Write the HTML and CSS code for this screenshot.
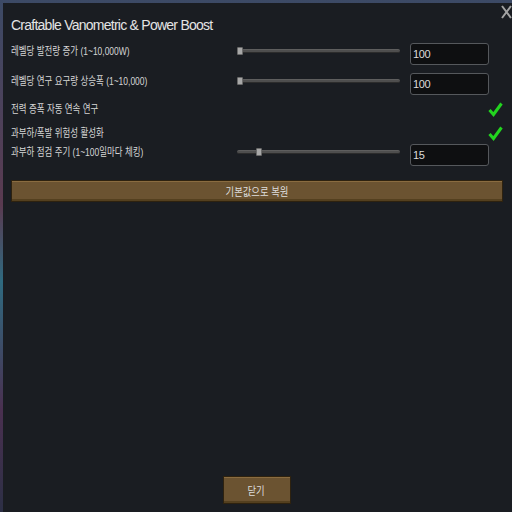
FILE: index.html
```html
<!DOCTYPE html>
<html>
<head>
<meta charset="utf-8">
<link rel="stylesheet" href="styles.css">
</head>
<body>
<div class="panel">
  <div class="title">Craftable Vanometric &amp; Power Boost</div>
  <svg class="close-x" width="11" height="14" viewBox="0 0 11 14"><path d="M1 1 L10 13 M10 1 L1 13" stroke="#a3a3a3" stroke-width="2" fill="none"/></svg>
  <div class="row r1">
    <div class="label">레벨당 발전량 증가 (1~10,000W)</div>
    <div class="slider"><div class="track"></div><div class="thumb" style="left:0px"></div></div>
    <div class="field">100</div>
  </div>
  <div class="row r2">
    <div class="label">레벨당 연구 요구량 상승폭 (1~10,000)</div>
    <div class="slider"><div class="track"></div><div class="thumb" style="left:0px"></div></div>
    <div class="field">100</div>
  </div>
  <div class="check-row r3">
    <div class="label">전력 증폭 자동 연속 연구</div>
    <svg class="check" width="15" height="15" viewBox="0 0 15 15"><path d="M1.5 8 L5.5 12.5 L13.5 1.5" stroke="#22d41f" stroke-width="3" fill="none"/></svg>
  </div>
  <div class="check-row r4">
    <div class="label">과부하/폭발 위험성 활성화</div>
    <svg class="check" width="15" height="15" viewBox="0 0 15 15"><path d="M1.5 8 L5.5 12.5 L13.5 1.5" stroke="#22d41f" stroke-width="3" fill="none"/></svg>
  </div>
  <div class="row r5">
    <div class="label">과부하 점검 주기 (1~100일마다 체킹)</div>
    <div class="slider"><div class="track"></div><div class="thumb" style="left:19px"></div></div>
    <div class="field">15</div>
  </div>
  <div class="btn wide"><span class="btn-text">기본값으로 복원</span></div>
  <div class="spacer"></div>
  <div class="footer"><div class="btn small"><span class="btn-text">닫기</span></div></div>
</div>
</body>
</html>
```
FILE: styles.css
```css
html, body {
  margin: 0;
  padding: 0;
  width: 512px;
  height: 512px;
  overflow: hidden;
}
body {
  background: linear-gradient(to bottom, #3c4a66 0%, #5a3a50 40%, #2f6a80 55%, #4a3050 80%, #2c2f45 100%);
  font-family: "Liberation Sans", "Noto Sans CJK KR", sans-serif;
  padding: 3px 0 0 3px;
  box-sizing: border-box;
}
.panel {
  position: relative;
  background: #1a1d22;
  width: 509px;
  height: 509px;
  box-sizing: border-box;
  padding: 12px 9px 0 8px;
  display: flex;
  flex-direction: column;
}
.title {
  font-size: 14px;
  letter-spacing: -0.75px;
  line-height: 20px;
  color: #e4e4e4;
}
.close-x {
  position: absolute;
  right: 0;
  top: 2px;
}
.label {
  font-size: 11px;
  line-height: 16px;
  color: #d6d6d6;
  white-space: nowrap;
  transform: scaleX(0.77);
  transform-origin: left center;
}
.row {
  display: grid;
  grid-template-columns: 216px 163px 79px;
  column-gap: 10px;
  align-items: start;
  height: 22px;
}
.r1 { margin-top: 8px; }
.r2 { margin-top: 8px; }
.r5 { margin-top: 1px; }
.slider {
  position: relative;
  height: 8px;
  margin-top: 4px;
}
.track {
  position: absolute;
  left: 0;
  right: 0;
  top: 2px;
  height: 4px;
  box-sizing: border-box;
  background: #4e4e4e;
  border-top: 1px solid #5e5e5e;
  border-bottom: 1px solid #2c2c2c;
  border-radius: 2px;
}
.thumb {
  position: absolute;
  top: 0;
  width: 6px;
  height: 8px;
  box-sizing: border-box;
  background: #a8a8a8;
  border: 1px solid #6a6a6a;
  border-radius: 1px;
}
.field {
  height: 22px;
  box-sizing: border-box;
  border: 1px solid #55585c;
  border-radius: 3px;
  background: #0e0f11;
  color: #dcdcdc;
  font-size: 11px;
  letter-spacing: -0.4px;
  line-height: 20px;
  padding-left: 2px;
}
.check-row {
  display: flex;
  justify-content: space-between;
  align-items: center;
  height: 20px;
}
.r3 { margin-top: 4px; }
.r4 { margin-top: 4px; }
.check { display: block; }
.btn {
  box-sizing: border-box;
  background: #6b5331;
  border: 1px solid #2e220f;
  box-shadow: inset 0 1px 0 #8a6c40, inset 0 -2px 0 #54401f;
  color: #dedede;
  font-size: 11px;
  display: flex;
  align-items: center;
  justify-content: center;
}
.btn-text {
  display: inline-block;
  transform: scaleX(0.85);
}
.wide {
  margin-top: 14px;
  height: 22px;
}
.spacer { flex: 1; }
.footer {
  display: flex;
  justify-content: center;
  padding-right: 1px;
  margin-bottom: 8px;
}
.small {
  width: 68px;
  height: 28px;
}
```
